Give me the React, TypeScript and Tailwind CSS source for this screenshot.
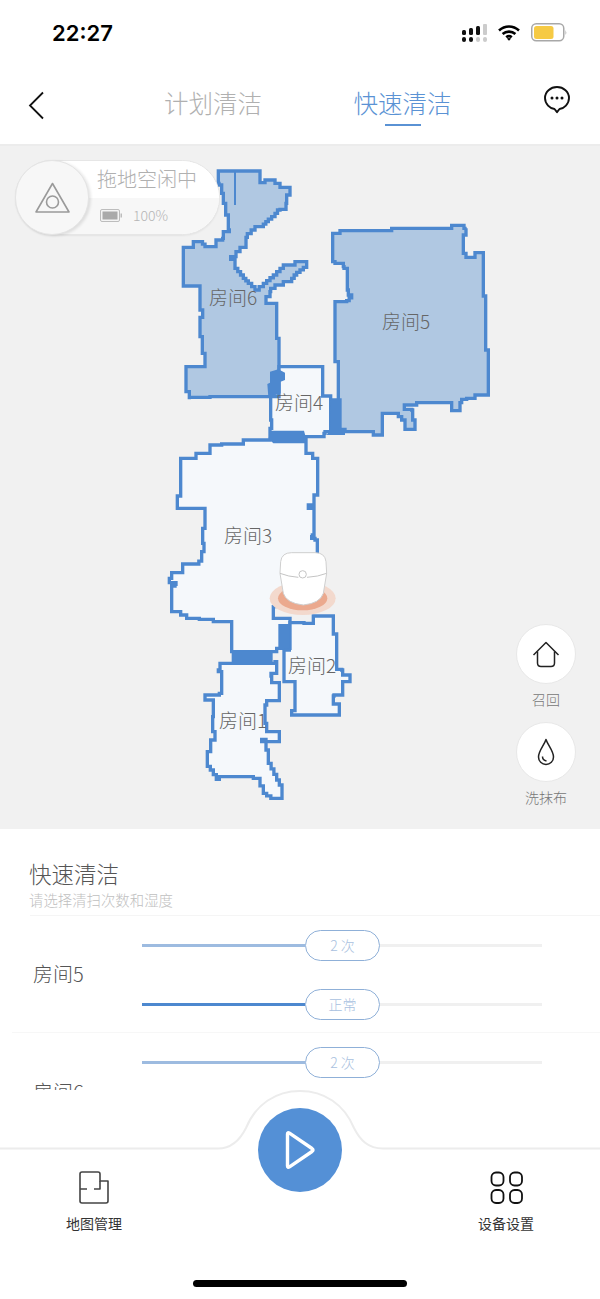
import React from "react";

const BLUE = "#4d88cf";
const room6 = "175,33 300,33 300,68 315,68 315,60 345,60 345,70 360,82 390,82 390,105 380,130 378,148 360,150 345,170 325,185 310,200 285,210 262,232 258,262 240,275 228,290 212,298 225,325 250,355 265,370 285,390 310,370 340,345 370,315 405,305 435,305 440,322 410,345 395,365 345,385 332,395 330,410 318,410 318,430 350,425 350,535 357,540 357,710 150,712 88,718 88,695 78,695 78,620 135,618 135,580 127,578 127,530 120,520 120,472 128,472 128,450 120,440 120,378 70,378 70,262 100,262 100,245 120,245 135,260 160,260 168,240 188,235 190,215 208,210 205,165 197,130 190,100 185,75 177,70";
const room5 = "518,220 540,220 540,212 695,212 695,205 875,205 875,196 912,196 912,205 920,205 918,225 910,240 910,280 918,292 945,290 945,278 970,278 970,408 977,408 977,570 985,570 985,705 955,705 945,715 920,718 905,728 900,752 875,752 875,728 775,728 770,735 733,738 733,748 755,750 758,780 765,785 765,808 738,808 735,780 715,760 667,760 667,825 645,825 640,815 555,808 530,808 535,605 527,605 525,425 560,422 575,405 565,390 562,325 552,320 550,310 525,305 518,305";
const room4 = "357,620 488,620 488,708 512,708 512,815 495,820 492,830 340,830 330,805 335,780 332,710 357,710";
const doors2 = ["330,635 355,628 375,638 375,660 362,665 362,700 325,712 322,672 330,668", "512,715 545,715 545,805 555,810 555,825 500,825 510,810", "330,812 432,812 438,835 438,850 340,850 328,838"];
const room3 = "62,85 108,85 108,70 150,68 150,45 185,42 250,30 330,28 438,30 438,70 458,72 458,85 473,85 473,195 462,195 462,225 445,228 445,235 462,238 462,315 452,315 455,325 465,330 472,368 472,500 345,530 340,530 340,565 390,570 390,655 350,665 215,665 215,575 160,575 160,568 118,565 80,555 62,545 38,545 35,468 50,468 48,458 28,458 28,445 35,428 68,428 68,402 108,402 125,385 125,365 132,340 128,295 135,235 52,240 52,198 62,195";
const room2 = "390,578 430,578 432,580 460,580 460,558 520,558 520,612 530,615 530,718 545,720 548,735 570,738 570,755 548,760 548,795 522,798 520,822 538,830 538,855 455,855 395,860 395,842 405,840 405,755 372,755 372,660 388,655";
const room1 = "180,700 345,695 350,730 333,738 335,758 358,762 358,812 320,825 315,880 320,905 358,915 358,935 305,928 318,960 325,1000 350,1050 366,1080 366,1105 345,1105 320,1090 300,1045 280,1040 178,1048 160,1020 142,998 142,965 152,930 165,905 158,860 160,810 135,808 135,795 178,790 185,725 175,720";
const doors3 = ["215,665 338,665 338,698 215,698", "355,582 388,582 388,655 355,660"];

// The map is a pixel grid: every slanted edge becomes a staircase.
function stairs(points: string): string {
  const pts = points.split(" ").map((p) => p.split(",").map(Number));
  let d = `M${pts[0][0]} ${pts[0][1]}`;
  for (let i = 0; i < pts.length; i++) {
    const [x0, y0] = pts[i];
    const [x1, y1] = pts[(i + 1) % pts.length];
    const dx = x1 - x0;
    const dy = y1 - y0;
    if (dx === 0 || dy === 0) {
      d += ` L${x1} ${y1}`;
      continue;
    }
    const n = Math.max(1, Math.round(Math.min(Math.abs(dx), Math.abs(dy)) / 9));
    for (let s = 1; s <= n; s++) {
      d += ` L${x0 + (dx * s) / n} ${y0 + (dy * (s - 1)) / n} L${x0 + (dx * s) / n} ${y0 + (dy * s) / n}`;
    }
  }
  return d + " Z";
}

const labels: [string, number, number][] = [
  ["房间6", 209, 298],
  ["房间5", 382, 322],
  ["房间4", 275, 403],
  ["房间3", 224, 536],
  ["房间2", 288, 666],
  ["房间1", 219, 721],
];

const T2 = "translate(160 160) scale(0.33333)";
const T3 = "translate(160 430) scale(0.33333)";

function FloorMap() {
  return (
    <svg viewBox="0 146 600 683" className="block w-full h-full">
      <g transform={T2}>
        <path d={stairs(room6)} fill="#b0c8e2" stroke={BLUE} strokeWidth="10" />
        <line x1="225" y1="35" x2="225" y2="135" stroke={BLUE} strokeWidth="6" />
        <path d={stairs(room5)} fill="#b0c8e2" stroke={BLUE} strokeWidth="10" />
        <path d={stairs(room4)} fill="#f5f8fb" stroke={BLUE} strokeWidth="10" />
      </g>
      <g transform={T3}>
        <path d={stairs(room3)} fill="#f5f8fb" stroke={BLUE} strokeWidth="10" />
        <path d={stairs(room2)} fill="#f5f8fb" stroke={BLUE} strokeWidth="10" />
        <path d={stairs(room1)} fill="#f5f8fb" stroke={BLUE} strokeWidth="10" />
        {doors3.map((d) => (
          <polygon key={d} points={d} fill={BLUE} />
        ))}
      </g>
      <g transform={T2}>
        {doors2.map((d) => (
          <polygon key={d} points={d} fill={BLUE} />
        ))}
      </g>
      <g transform={T3}>
        <ellipse cx="428" cy="505" rx="99" ry="50" fill="#f3d9cd" />
        <ellipse cx="428" cy="505" rx="74" ry="36" fill="#eba98e" />
        <path d="M360 430 L362 395 Q365 368 395 368 H465 Q495 368 498 395 L500 430 L490 490 Q480 520 430 525 Q380 520 370 490 Z" fill="#ffffff" stroke="#cfcfcf" strokeWidth="3" />
        <path d="M360 430 Q385 440 415 442 M441 442 Q475 440 500 430" fill="none" stroke="#c4c4c4" strokeWidth="3" />
        <circle cx="428" cy="433" r="11" fill="#ffffff" stroke="#c4c4c4" strokeWidth="3" />
      </g>
      {labels.map(([t, x, y]) => (
        <text key={t} x={x} y={y + 6.5} fontSize="19" fill="#666666" fontWeight="300">
          {t}
        </text>
      ))}
    </svg>
  );
}

function Slider({ value, fill }: { value: string; fill: string }) {
  return (
    <div className="flex items-center w-[400px] h-[31px]">
      <div className="w-[163px] h-[3px]" style={{ backgroundColor: fill }} />
      <div className="w-[75px] h-[31px] shrink-0 rounded-full border-[1.5px] border-[#8fb0d8] bg-white flex items-center justify-center text-[14px] text-[#a9c1e0] font-light">
        {value}
      </div>
      <div className="flex-1 h-[3px] bg-[#f0f0f0]" />
    </div>
  );
}

function RoomRow({ name, sliders, className }: { name: string; sliders: [string, string][]; className: string }) {
  return (
    <div className={`flex items-center h-[117px] shrink-0 ${className}`}>
      <div className="w-[109px] text-[20px] text-[#555555] font-light">{name}</div>
      <div className="flex flex-col gap-[28px] self-start pt-[14px]">
        {sliders.map(([v, c], i) => (
          <Slider key={i} value={v} fill={c} />
        ))}
      </div>
    </div>
  );
}

function SideButton({ label, children, mt }: { label: string; children: React.ReactNode; mt: string }) {
  return (
    <div className={`flex flex-col items-center w-[60px] ${mt}`}>
      <div className="w-[60px] h-[60px] rounded-full bg-white border border-[#e8e8e8] flex items-center justify-center">
        {children}
      </div>
      <div className="mt-[5px] text-[14px] leading-[20px] text-[#777777] font-light whitespace-nowrap">{label}</div>
    </div>
  );
}

export default function App() {
  return (
    <div className="w-[600px] h-[1299px] flex flex-col bg-white overflow-hidden font-['Noto_Sans_CJK_SC','Noto_Sans',sans-serif]">
      {/* Status bar */}
      <div className="h-[75px] shrink-0 flex items-start justify-between pt-[19px] pl-[52px] pr-[33px]">
        <div className="text-[22px] leading-[28px] font-semibold text-black font-['Inter',sans-serif]">22:27</div>
        <div className="flex items-center gap-[11px] pt-[4px]">
          <svg width="25" height="18" viewBox="0 0 25 18">
            <rect x="0" y="6" width="4" height="5" rx="1.5" fill="#111" />
            <rect x="0" y="13" width="4" height="5" rx="2" fill="#111" />
            <rect x="7" y="4" width="4" height="7" rx="1.5" fill="#111" />
            <rect x="7" y="13" width="4" height="5" rx="2" fill="#111" />
            <rect x="14" y="2" width="4" height="9" rx="1.5" fill="#111" />
            <rect x="14" y="13" width="4" height="5" rx="2" fill="#ccc" />
            <rect x="21" y="0" width="4" height="11" rx="1" fill="#ccc" />
            <rect x="21" y="13" width="4" height="5" rx="2" fill="#ccc" />
          </svg>
          <svg width="22" height="16" viewBox="0 0 22 16" fill="none" stroke="#000" strokeWidth="2.6">
            <path d="M1 5.5 C7 0.2 15 0.2 21 5.5" />
            <path d="M4.6 9 C8.2 5.8 13.8 5.8 17.4 9" />
            <path d="M8.2 12.2 C9.8 10.9 12.2 10.9 13.8 12.2" />
            <path d="M11 15.8 L8.8 13.6 Q11 12.2 13.2 13.6 Z" fill="#000" stroke="none" />
          </svg>
          <svg width="36" height="19" viewBox="0 0 36 19">
            <rect x="0.75" y="0.75" width="32" height="17" rx="4.5" fill="#fff" stroke="#a8a8a8" strokeWidth="1.5" />
            <rect x="3" y="3" width="19.5" height="13" rx="2.5" fill="#f6ca44" />
            <path d="M34.5 7 Q36 9.5 34.5 12 Z" fill="#a8a8a8" />
          </svg>
        </div>
      </div>

      {/* Nav */}
      <div className="h-[71px] shrink-0 border-b-2 border-[#ececec] flex items-start relative">
        <svg className="ml-[28px] mt-[16px] shrink-0" width="17" height="29" viewBox="0 0 17 29" fill="none" stroke="#111" strokeWidth="1.8">
          <path d="M15 1.5 L2 14.5 L15 27.5" />
        </svg>
        <div className="ml-[119px] mt-[10px] w-[97px] text-[24.5px] leading-[35px] text-[#b0b0b0] font-light whitespace-nowrap">计划清洁</div>
        <div className="ml-[93px] mt-[10px] w-[97px] flex flex-col items-center">
          <div className="text-[24.5px] leading-[35px] text-[#5a92d4] font-light whitespace-nowrap">快速清洁</div>
          <div className="mt-[4px] w-[36px] h-[2px] bg-[#5a92d4]" />
        </div>
        <svg className="ml-[93px] mt-[11px] shrink-0" width="26" height="28" viewBox="0 0 26 28" fill="none">
          <path d="M13 1 C6.4 1 1 5.9 1 12 C1 18 6 22.5 10.5 23 L13 26.2 L15.5 23 C20 22.5 25 18 25 12 C25 5.9 19.6 1 13 1 Z" stroke="#111" strokeWidth="1.9" strokeLinejoin="round" />
          <circle cx="8" cy="12" r="1.5" fill="#111" />
          <circle cx="13" cy="12" r="1.5" fill="#111" />
          <circle cx="18" cy="12" r="1.5" fill="#111" />
        </svg>
      </div>

      {/* Map */}
      <div className="h-[683px] shrink-0 relative bg-[#f1f1f1]">
        <FloorMap />
        {/* status pill */}
        <div className="absolute left-[15px] top-[14px] w-[205px] h-[75px] rounded-full bg-white border border-[#e6e6e6] overflow-hidden flex flex-col shadow-[0_1px_2px_rgba(0,0,0,0.06)]">
          <div className="h-[37px] bg-white pl-[81px] pt-[3px] text-[20px] leading-[30px] text-[#b0b0b0] font-light whitespace-nowrap">拖地空闲中</div>
          <div className="flex-1 bg-[#f7f7f7] pl-[84px] flex items-center gap-[11px] pb-[2px]">
            <svg width="22" height="13" viewBox="0 0 22 13">
              <rect x="0.5" y="0.5" width="19" height="12" rx="1.5" fill="#f4f4f4" stroke="#bdbdbd" />
              <rect x="2.5" y="2.5" width="15" height="8" fill="#aaaaaa" />
              <rect x="20.5" y="4.5" width="1.5" height="4" fill="#bdbdbd" />
            </svg>
            <span className="text-[14px] leading-[20px] text-[#b5b5b5] font-light">100%</span>
          </div>
        </div>
        <div className="absolute left-[15px] top-[14px] w-[74px] h-[75px] rounded-full bg-[#f7f7f7] border border-[#e4e4e4] shadow-[2px_1px_3px_rgba(0,0,0,0.10)] flex items-center justify-center">
          <svg width="37" height="32" viewBox="0 0 37 32" fill="none" stroke="#9a9a9a" strokeWidth="1.6" strokeLinejoin="round">
            <path d="M18.5 1.5 L35 30 H2 Z" />
            <circle cx="18.5" cy="20" r="6" />
          </svg>
        </div>
        {/* side buttons */}
        <div className="absolute left-[516px] top-[478px] flex flex-col">
          <SideButton label="召回" mt="">
            <svg width="28" height="27" viewBox="0 0 28 27" fill="none" stroke="#222" strokeWidth="1.5" strokeLinejoin="round">
              <path d="M1.5 14 L14 1.5 L26.5 14" />
              <path d="M5.5 10.5 V22 Q5.5 25.5 9 25.5 H19 Q22.5 25.5 22.5 22 V10.5" />
            </svg>
          </SideButton>
          <SideButton label="洗抹布" mt="mt-[13px]">
            <svg width="18" height="28" viewBox="0 0 18 28" fill="none" stroke="#222" strokeWidth="1.5" strokeLinejoin="round">
              <path d="M9 1.5 C7 7.5 1.5 13 1.5 19 C1.5 23.2 4.8 26.5 9 26.5 C13.2 26.5 16.5 23.2 16.5 19 C16.5 13 11 7.5 9 1.5 Z" />
              <path d="M5.5 18.5 C5.5 21 7 22.5 9.5 23" />
            </svg>
          </SideButton>
        </div>
      </div>

      {/* Panel */}
      <div className="h-[261px] shrink-0 overflow-hidden flex flex-col">
        <div className="h-[86px] shrink-0 pl-[29px] pt-[31px] flex flex-col">
          <div className="text-[22.5px] leading-[26px] text-[#555555] font-light whitespace-nowrap">快速清洁</div>
          <div className="mt-[5px] text-[14.4px] leading-[18px] text-[#c0c0c0] font-light whitespace-nowrap">请选择清扫次数和湿度</div>
        </div>
        <div className="ml-[30px] h-px shrink-0 bg-[#f5f5f5]" />
        <RoomRow name="房间5" className="ml-[12px] pl-[21px] border-b border-[#f7f7f7]" sliders={[["2 次", "#9dbbe0"], ["正常", BLUE]]} />
        <RoomRow name="房间6" className="pl-[33px]" sliders={[["2 次", "#9dbbe0"]]} />
      </div>

      {/* Bottom bar */}
      <div className="flex-1 relative bg-white">
        <div className="absolute left-0 top-0 w-[600px] h-[60px] pointer-events-none">
          <svg width="600" height="60" viewBox="0 0 600 60" fill="none">
            <path d="M0 58.5 H218 C232 58.5 240 50 246 38 C256 14 276 1 300 1 C324 1 344 14 354 38 C360 50 368 58.5 383 58.5 H600" fill="#ffffff" stroke="#ececec" strokeWidth="2" />
          </svg>
        </div>
        <div className="absolute left-[258px] top-[18px] w-[84px] h-[84px] rounded-full bg-[#5490d6] flex items-center justify-center">
          <svg width="32" height="40" viewBox="0 0 32 40" fill="none" stroke="#fff" strokeWidth="3.4" strokeLinejoin="round">
            <path d="M3.5 4 Q3.5 2 5.5 3.2 L28 18.5 Q30 20 28 21.5 L5.5 36.8 Q3.5 38 3.5 36 Z" />
          </svg>
        </div>
        <div className="relative flex justify-between pt-[81px] pl-[66px] pr-[66px]">
          <div className="flex flex-col items-center w-[56px]">
            <svg width="30" height="33" viewBox="0 0 30 33" fill="none" stroke="#444" strokeWidth="1.6" strokeLinejoin="round">
              <path d="M1 3 Q1 1 3 1 H19 Q21 1 21 3 V10 H29 V30 Q29 32 27 32 H3 Q1 32 1 30 Z" />
              <path d="M1 18 H8 M15 18 H21 V10" />
            </svg>
            <div className="mt-[9px] text-[14px] leading-[20px] text-[#333333] whitespace-nowrap">地图管理</div>
          </div>
          <div className="flex flex-col items-center w-[56px]">
            <svg width="33" height="33" viewBox="0 0 33 33" fill="none" stroke="#111" strokeWidth="1.8">
              <rect x="1.5" y="1.5" width="12" height="13" rx="4.5" />
              <rect x="20" y="1.5" width="12" height="13" rx="4.5" />
              <rect x="1.5" y="19" width="12" height="13" rx="4.5" />
              <rect x="20" y="19" width="12" height="13" rx="4.5" />
            </svg>
            <div className="mt-[9px] text-[14px] leading-[20px] text-[#333333] whitespace-nowrap">设备设置</div>
          </div>
        </div>
        <div className="absolute left-[193px] top-[190px] w-[214px] h-[7px] rounded-full bg-black" />
      </div>
    </div>
  );
}
